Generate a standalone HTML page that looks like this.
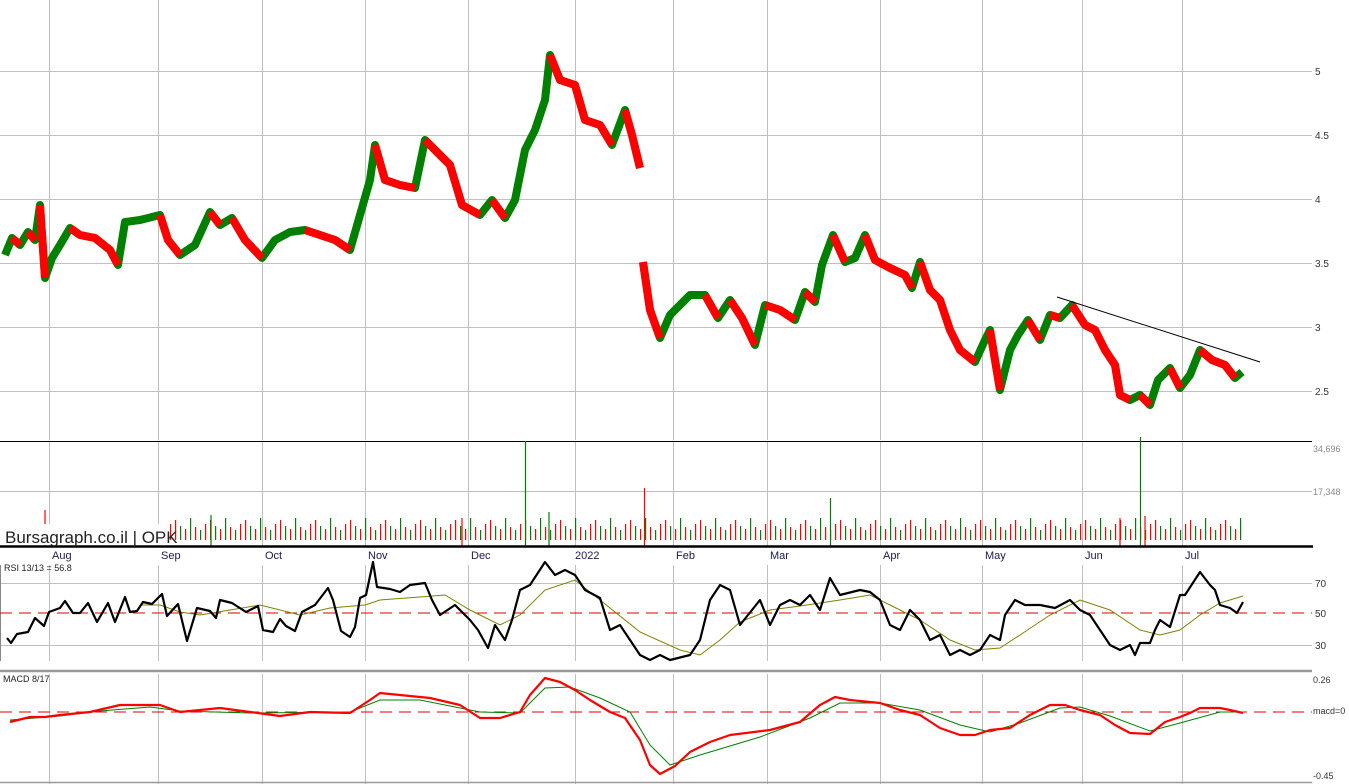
<!DOCTYPE html><html><head><meta charset="utf-8"><style>
html,body{margin:0;padding:0;background:#fff;overflow:hidden}
svg{display:block}
text{font-family:"Liberation Sans",sans-serif}
</style></head><body>
<svg width="1349" height="784" xmlns="http://www.w3.org/2000/svg">
<defs>
<pattern id="vol" x="0" y="0" width="35" height="30" patternUnits="userSpaceOnUse">
<rect x="0" y="10" width="1.2" height="20" fill="#ff0000"/><rect x="5" y="16" width="1.2" height="14" fill="#008000"/><rect x="10" y="19" width="1.2" height="11" fill="#ff0000"/><rect x="15" y="8" width="1.2" height="22" fill="#008000"/><rect x="20" y="17" width="1.2" height="13" fill="#ff0000"/><rect x="25" y="20" width="1.2" height="10" fill="#008000"/><rect x="30" y="14" width="1.2" height="16" fill="#ff0000"/>
</pattern>
</defs>
<g stroke="#c0c0c0" stroke-width="1">
<path d="M49.5 0V440M158.5 0V440M262.5 0V440M365.5 0V440M468.5 0V440M575.5 0V440M673.5 0V440M767.5 0V440M880.5 0V440M982.5 0V440M1082.5 0V440M1182.5 0V440"/>
<path d="M49.5 441V546M158.5 441V546M262.5 441V546M365.5 441V546M468.5 441V546M575.5 441V546M673.5 441V546M767.5 441V546M880.5 441V546M982.5 441V546M1082.5 441V546M1182.5 441V546"/>
<path d="M49.5 565V661M158.5 565V661M262.5 565V661M365.5 565V661M468.5 565V661M575.5 565V661M673.5 565V661M767.5 565V661M880.5 565V661M982.5 565V661M1082.5 565V661M1182.5 565V661"/>
<path d="M49.5 674V784M158.5 674V784M262.5 674V784M365.5 674V784M468.5 674V784M575.5 674V784M673.5 674V784M767.5 674V784M880.5 674V784M982.5 674V784M1082.5 674V784M1182.5 674V784"/>
<path d="M0 71.5H1312M0 135.5H1312M0 199.5H1312M0 263.5H1312M0 327.5H1312M0 391.5H1312M0 491.5H1312M0 583.5H1312M0 645.5H1312"/>
</g>
<g font-size="10" fill="#333">
<text x="1315" y="75">5</text><text x="1315" y="139">4.5</text><text x="1315" y="203">4</text><text x="1315" y="267">3.5</text><text x="1315" y="331">3</text><text x="1315" y="395">2.5</text>
<text x="1313" y="452" font-size="9" fill="#888">34,696</text><text x="1313" y="495" font-size="9" fill="#888">17,348</text>
<text x="1315" y="587">70</text><text x="1315" y="617">50</text><text x="1315" y="649">30</text>
<text x="1313" y="683" font-size="9">0.26</text><text x="1313" y="714" font-size="9">macd=0</text><text x="1313" y="779" font-size="9">-0.45</text>
</g>
<g font-size="11" fill="#1a1a50">
<text x="52" y="559">Aug</text><text x="161" y="559">Sep</text><text x="265" y="559">Oct</text><text x="368" y="559">Nov</text><text x="471" y="559">Dec</text><text x="575" y="559">2022</text><text x="676" y="559">Feb</text><text x="770" y="559">Mar</text><text x="883" y="559">Apr</text><text x="985" y="559">May</text><text x="1085" y="559">Jun</text><text x="1185" y="559">Jul</text>
</g>
<g fill="none" stroke-linejoin="round" stroke-width="8">
<polyline stroke="#008000" points="5,255 12,238 20,245 28,232 35,240 40,205 45,278 52,258 60,245 70,228 80,235 95,238 110,250 118,265 125,222 140,220 160,215 168,240 180,255 195,245 210,212 220,225 232,218 245,240 262,258 275,240 290,232 305,230 320,235 335,240 350,250 360,215 370,180 375,145 385,180 400,185 415,188 425,140 440,155 450,165 462,205 480,215 492,200 505,218 515,200 525,150 535,130 545,100 550,55 560,80 575,85 585,120 600,125 612,145 625,110 632,135 640,168"/>
<polyline stroke="#008000" points="643,262 650,310 660,338 670,315 680,305 690,295 705,295 718,318 730,300 742,318 755,345 765,305 780,310 795,320 805,292 815,302 822,265 833,235 845,262 855,258 865,235 875,260 890,268 905,275 912,288 920,262 930,290 940,300 950,330 960,350 975,362 985,340 990,330 1000,390 1010,350 1018,335 1028,320 1040,340 1050,315 1060,318 1072,305 1085,325 1095,330 1105,350 1115,365 1120,395 1130,400 1140,395 1150,405 1158,380 1170,368 1180,388 1190,375 1200,350 1212,360 1225,365 1235,378 1242,372"/>
<path stroke="#ff0000" d="M12 238L20 245M28 232L35 240M40 205L45 278M70 228L80 235L95 238L110 250L118 265M160 215L168 240L180 255M210 212L220 225M232 218L245 240L262 258M305 230L320 235L335 240L350 250M375 145L385 180L400 185L415 188M425 140L440 155L450 165L462 205L480 215M492 200L505 218M550 55L560 80L575 85L585 120L600 125L612 145M625 110L632 135L640 168M643 262L650 310L660 338M705 295L718 318M730 300L742 318L755 345M765 305L780 310L795 320M805 292L815 302M833 235L845 262M865 235L875 260L890 268L905 275L912 288M920 262L930 290L940 300L950 330L960 350L975 362M990 330L1000 390M1028 320L1040 340M1050 315L1060 318M1072 305L1085 325L1095 330L1105 350L1115 365L1120 395L1130 400M1140 395L1150 405M1170 368L1180 388M1200 350L1212 360L1225 365L1235 378"/>
</g>
<line x1="1057" y1="297" x2="1260" y2="362" stroke="#000" stroke-width="1"/>
<line x1="0" y1="441.5" x2="1312" y2="441.5" stroke="#000"/>
<rect x="170" y="516" width="1075" height="30" fill="url(#vol)"/>
<g stroke-width="1.2">
<line x1="45" y1="546" x2="45" y2="510" stroke="#ff0000"/>
<line x1="525.5" y1="546" x2="525.5" y2="441" stroke="#008000"/>
<line x1="1140.5" y1="546" x2="1140.5" y2="437" stroke="#008000"/>
<line x1="644.5" y1="546" x2="644.5" y2="488" stroke="#ff0000"/>
<line x1="830.5" y1="546" x2="830.5" y2="498" stroke="#008000"/>
<line x1="211" y1="546" x2="211" y2="515" stroke="#008000"/>
<line x1="549" y1="546" x2="549" y2="512" stroke="#008000"/>
<line x1="462" y1="546" x2="462" y2="518" stroke="#ff0000"/>
<line x1="1120" y1="546" x2="1120" y2="518" stroke="#ff0000"/>
<line x1="1145" y1="546" x2="1145" y2="516" stroke="#ff0000"/>
</g>
<line x1="0" y1="546.5" x2="1313" y2="546.5" stroke="#000" stroke-width="2.5"/>
<rect x="0" y="524" width="168" height="21" fill="#fff"/>
<text x="5" y="543" font-size="17" fill="#222">Bursagraph.co.il | OPK</text>
<line x1="0.5" y1="565" x2="0.5" y2="661" stroke="#888"/>
<text x="4" y="571" font-size="9" fill="#222">RSI 13/13 = 56.8</text>
<line x1="0" y1="613" x2="1312" y2="613" stroke="#e00000" stroke-dasharray="12,7"/>
<polyline fill="none" stroke="#808000" stroke-width="1" points="140,605 160,605 180,612 200,615 230,610 260,605 300,615 330,608 365,605 380,600 420,597 445,595 470,610 500,625 520,615 545,590 575,580 600,600 640,632 680,650 700,655 720,640 740,622 770,610 800,606 840,600 870,595 890,605 920,620 950,640 975,650 1000,648 1020,635 1050,615 1080,600 1110,610 1140,630 1160,635 1180,630 1200,615 1220,603 1243,596"/>
<polyline fill="none" stroke="#000" stroke-width="2.2" stroke-linejoin="round" points="7,638 11,643 17,634 28,632 35,618 44,626 49,612 60,608 65,601 73,613 80,613 88,603 97,622 108,603 115,622 125,597 130,612 137,611 143,602 152,604 162,594 167,616 178,604 187,641 197,608 210,611 216,618 220,600 232,603 246,612 258,606 263,630 273,632 280,619 286,626 295,631 302,612 315,605 328,588 333,600 341,631 350,637 355,627 360,598 366,595 373,562 377,587 390,589 400,592 410,585 425,583 432,600 440,615 455,605 470,620 478,630 488,648 495,625 505,640 512,620 520,590 530,585 545,562 555,575 565,570 575,575 585,590 600,598 610,630 620,625 630,640 640,655 650,660 660,655 670,660 690,655 700,640 710,600 720,585 730,590 740,625 752,610 760,600 770,625 780,605 790,600 800,605 810,595 820,610 830,578 840,595 860,590 870,592 880,600 890,625 900,630 910,610 920,620 930,640 940,635 950,655 960,650 970,655 980,650 990,635 1000,640 1005,615 1015,600 1025,605 1040,605 1055,608 1070,600 1080,610 1090,615 1100,630 1110,645 1120,650 1130,645 1135,655 1140,643 1150,643 1155,630 1160,620 1170,627 1180,595 1185,595 1200,572 1210,585 1215,590 1220,605 1230,608 1237,613 1243,602"/>
<line x1="0" y1="671" x2="1312" y2="671" stroke="#999" stroke-width="2.5"/>
<text x="3" y="682" font-size="9" fill="#222">MACD 8/17</text>
<line x1="0" y1="712" x2="1312" y2="712" stroke="#e00000" stroke-dasharray="12,7"/>
<polyline fill="none" stroke="#008000" stroke-width="1" points="10,720 60,716 100,711 150,707 180,711 250,713 350,712 380,700 420,700 480,712 520,713 545,688 570,687 600,698 630,712 650,745 670,765 700,755 760,737 810,718 840,703 880,703 920,710 960,725 990,732 1020,723 1060,708 1080,707 1110,716 1150,731 1180,723 1220,712 1243,712"/>
<polyline fill="none" stroke="#ff0000" stroke-width="2.2" stroke-linejoin="round" points="10,722 30,717 45,717 60,715 90,712 120,705 160,705 180,712 220,708 250,712 280,716 310,712 350,713 370,700 380,693 400,695 430,698 460,705 480,718 500,718 520,712 530,695 545,678 560,682 575,690 590,700 610,712 625,718 640,740 650,765 660,774 675,766 690,752 710,742 730,735 770,730 800,722 820,705 835,697 850,700 880,703 900,710 920,715 940,728 960,735 975,735 990,730 1010,728 1030,715 1050,705 1065,705 1080,710 1100,715 1115,725 1130,733 1150,734 1165,722 1180,717 1190,713 1200,708 1220,708 1230,710 1243,713"/>
<line x1="0" y1="782.5" x2="1312" y2="782.5" stroke="#999" stroke-width="1.5"/>
</svg>
</body></html>
